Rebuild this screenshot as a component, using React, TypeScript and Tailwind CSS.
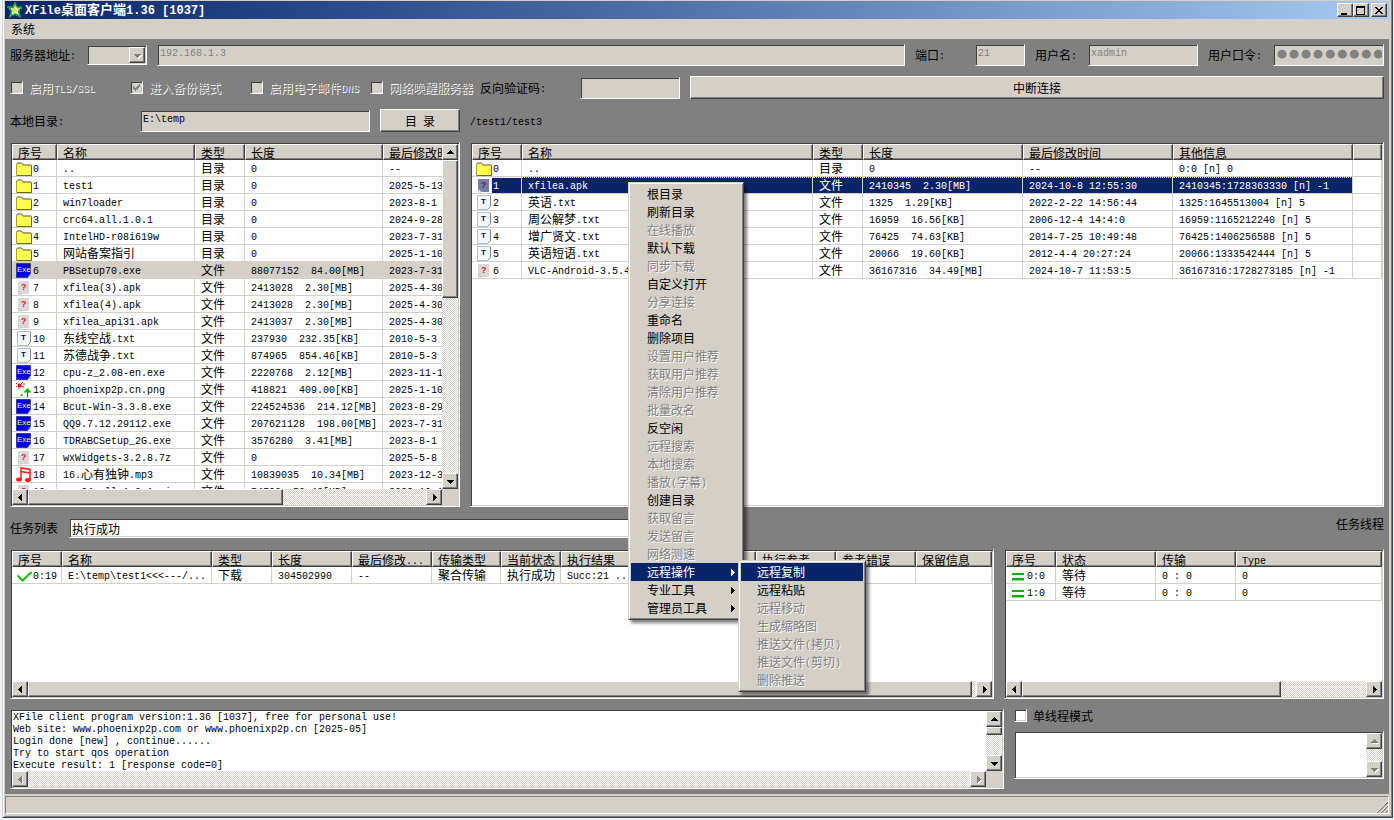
import { Fragment, type ReactNode } from "react";
import clsx from "clsx";

const sunken =
  "border border-t-[#808080] border-l-[#808080] border-r-white border-b-white p-px shadow-[inset_1px_1px_0_#404040,inset_-1px_-1px_0_#d4d0c8]";
const raised =
  "border border-t-white border-l-white border-r-[#404040] border-b-[#404040] bg-[#d4d0c8] shadow-[inset_-1px_-1px_0_#808080]";
const track =
  "bg-[repeating-conic-gradient(#ffffff_0_25%,#d4d0c8_0_50%)] bg-[length:2px_2px]";
const mono = "font-['Liberation_Mono','Noto_Sans_CJK_SC',monospace]";

/* Chinese runs are 12px, Latin runs are set half as wide */
function Mixed({ text }: { text: string }) {
  const runs = text.match(/[\u2e80-\uffff]+|[^\u2e80-\uffff]+/g) ?? [];
  return (
    <>
      {runs.map((run, i) =>
        /[\u2e80-\uffff]/.test(run) ? (
          <Fragment key={i}>{run}</Fragment>
        ) : (
          <span key={i} className={clsx("align-[1px] text-[10px] leading-none whitespace-pre", mono)}>
            {run}
          </span>
        )
      )}
    </>
  );
}

type Dir = "up" | "down" | "left" | "right";

const arrowPaths: Record<Dir, string> = {
  up: "M4 2h1v1h1v1h1v1h1v1H1V5h1V4h1V3h1z",
  down: "M1 3h7v1H7v1H6v1H5v1H4V6H3V5H2V4H1z",
  left: "M5 1h1v7H5V7H4V6H3V5H2V4h1V3h1V2h1z",
  right: "M3 1h1v1h1v1h1v1h1v1H6v1H5v1H4v1H3z",
};

function Arrow({ dir, disabled }: { dir: Dir; disabled?: boolean }) {
  return (
    <svg
      viewBox="0 0 9 9"
      shapeRendering="crispEdges"
      className={clsx("h-[9px] w-[9px] shrink-0", disabled && "drop-shadow-[1px_1px_0_#ffffff]")}
      fill={disabled ? "#808080" : "currentColor"}
    >
      <path d={arrowPaths[dir]} />
    </svg>
  );
}

function ScrollButton({ dir, disabled }: { dir: Dir; disabled?: boolean }) {
  return (
    <button
      type="button"
      aria-label={`scroll ${dir}`}
      disabled={disabled}
      className={clsx("flex h-4 w-4 shrink-0 items-center justify-center", raised)}
    >
      <Arrow dir={dir} disabled={disabled} />
    </button>
  );
}

function HScroll({ thumb, disabled }: { thumb?: string; disabled?: boolean }) {
  return (
    <div className={clsx("flex h-4 min-w-0 flex-1", track)}>
      <ScrollButton dir="left" disabled={disabled} />
      <div className="flex min-w-0 flex-1">{thumb && <div className={clsx(raised, thumb)} />}</div>
      <ScrollButton dir="right" disabled={disabled} />
    </div>
  );
}

function VScroll({ thumb, disabled }: { thumb?: string; disabled?: boolean }) {
  return (
    <div className={clsx("flex w-4 shrink-0 flex-col", track)}>
      <ScrollButton dir="up" disabled={disabled} />
      <div className="min-h-0 flex-1">{thumb && <div className={clsx(raised, thumb)} />}</div>
      <ScrollButton dir="down" disabled={disabled} />
    </div>
  );
}

type IconName = "folder" | "exe" | "unknown" | "text" | "image" | "music" | "done" | "idle";

function FileIcon({ name, tinted }: { name: IconName; tinted?: boolean }) {
  return (
    <svg viewBox="0 0 16 15" className="h-[15px] w-4 shrink-0">
      {name === "folder" && (
        <>
          <path d="M.5 14.500v-11l1-1.500h4l1.500 2h8.500v10.500z" fill="#ffff4d" stroke="#a8a020" />
          <path d="M.5 3.500l1-1.500h4l1.500 2h8" fill="none" stroke="#808080" />
          <path d="M15.500 5v9.500H1" fill="none" stroke="#6b6b10" />
        </>
      )}
      {name === "exe" && (
        <>
          <path d="M.5.5h14v10l-3 4H.5z" fill="#0000e6" stroke="#3a3a9a" />
          <path d="M15 11.500v3h-3z" fill="#9fe8ff" />
          <text x="1" y="9" fontSize="8" fontFamily="Liberation Sans, sans-serif" fill="#ffff30">
            Exe
          </text>
        </>
      )}
      {name === "unknown" && (
        <>
          <path d="M2 1h11v13H5l-3-3z" fill={tinted ? "#7080a8" : "#d9d9d9"} />
          <path d="M2.500 11v3h3z" fill="#ffffff" stroke="#9a9a9a" strokeWidth=".6" />
          <text x="5" y="10" fontSize="9" fontWeight="bold" fontFamily="Liberation Sans, sans-serif" fill={tinted ? "#80103c" : "#e81010"}>
            ?
          </text>
        </>
      )}
      {name === "text" && (
        <>
          <path d="M1.500.5h13v11l-3 3h-10z" fill="#f0f8ff" stroke="#b4bcc4" />
          <path d="M14.500 1v10.500l-3 3" fill="none" stroke="#808890" />
          <text x="5" y="9" fontSize="8" fontWeight="bold" fontFamily="Liberation Sans, sans-serif" fill="#101010">
            T
          </text>
        </>
      )}
      {name === "image" && (
        <>
          <circle cx="3.500" cy="3.500" r="2" fill="#ff1010" />
          <path d="M0 1l1 1M5 2l2-2M5 4l3 1M3 5v2M0 5l1-1M7 2h2" stroke="#ff1010" />
          <path d="M11.500 15V8" stroke="#008000" />
          <path d="M11.500 6l4 4.500h-8z" fill="#00b000" />
          <path d="M4 13.500h3M5 12.500h2" stroke="#40c040" />
        </>
      )}
      {name === "music" && (
        <>
          <path d="M5 12V1l9 1.500v10M5 4.500l9 1.500" fill="none" stroke="#ff1818" strokeWidth="1.500" />
          <ellipse cx="3" cy="12.500" rx="3" ry="2" fill="#ff1818" />
          <ellipse cx="12" cy="13" rx="3" ry="2" fill="#ff1818" />
        </>
      )}
      {name === "done" && (
        <path d="M1.500 7.500l5 5 9-8.500" fill="none" stroke="#10c010" strokeWidth="2" />
      )}
      {name === "idle" && (
        <>
          <path d="M2 6h12M2 11h12" stroke="#00b400" strokeWidth="2" />
          <path d="M2 12.500h12" stroke="#80e080" />
        </>
      )}
    </svg>
  );
}

interface Row {
  icon: IconName;
  cells: string[];
  state?: "dimmed" | "active";
}

interface GridProps {
  label: string;
  heads: string[];
  widths: string[];
  rows: Row[];
  className?: string;
}

function ListGrid({ label, heads, widths, rows, className }: GridProps) {
  return (
    <table
      aria-label={label}
      className={clsx("table-fixed border-separate border-spacing-0", className)}
    >
      <colgroup>
        {widths.map((w, i) => (
          <col key={i} className={w} />
        ))}
      </colgroup>
      <thead>
        <tr>
          {heads.map((head, i) => (
            <th key={i} scope="col" className="p-0 text-left font-normal">
              <div className={clsx("h-4 overflow-hidden pl-[5px] leading-[15px] whitespace-nowrap", raised)}>
                <Mixed text={head} />
              </div>
            </th>
          ))}
        </tr>
      </thead>
      <tbody>
        {rows.map((row) => (
          <tr key={row.cells[0]} className={clsx(row.state === "dimmed" && "bg-[#d4d0c8]")}>
            {heads.map((_, i) => {
              const active = row.state === "active" && row.cells[i] !== undefined;
              return (
                <td
                  key={i}
                  className={clsx(
                    "h-[17px] overflow-hidden border-r border-b border-[#d4d0c8] p-0 whitespace-nowrap",
                    active && i > 0 && "border-t border-t-[#f0d890] bg-[#0a246a] text-white [border-top-style:dotted]"
                  )}
                >
                  {i === 0 ? (
                    <div className="flex h-[15px] items-center pl-1 leading-[14px]">
                      <FileIcon name={row.icon} tinted={active} />
                      <span
                        className={clsx(
                          "h-[15px] flex-1 pl-px",
                          active && "bg-[#0a246a] text-white outline-1 outline-dotted outline-[#f0d890]"
                        )}
                      >
                        <Mixed text={row.cells[0]} />
                      </span>
                    </div>
                  ) : (
                    <div className="h-[15px] pl-[6px] leading-[14px]">
                      <Mixed text={row.cells[i] ?? ""} />
                    </div>
                  )}
                </td>
              );
            })}
          </tr>
        ))}
      </tbody>
    </table>
  );
}

const localRows: Row[] = [
  { icon: "folder", cells: ["0", "..", "目录", "0", "--"] },
  { icon: "folder", cells: ["1", "test1", "目录", "0", "2025-5-13"] },
  { icon: "folder", cells: ["2", "win7loader", "目录", "0", "2023-8-1"] },
  { icon: "folder", cells: ["3", "crc64.all.1.0.1", "目录", "0", "2024-9-28"] },
  { icon: "folder", cells: ["4", "IntelHD-r08i619w", "目录", "0", "2023-7-31"] },
  { icon: "folder", cells: ["5", "网站备案指引", "目录", "0", "2025-1-10"] },
  { icon: "exe", cells: ["6", "PBSetup70.exe", "文件", "88077152  84.00[MB]", "2023-7-31"], state: "dimmed" },
  { icon: "unknown", cells: ["7", "xfilea(3).apk", "文件", "2413028  2.30[MB]", "2025-4-30"] },
  { icon: "unknown", cells: ["8", "xfilea(4).apk", "文件", "2413028  2.30[MB]", "2025-4-30"] },
  { icon: "unknown", cells: ["9", "xfilea_api31.apk", "文件", "2413037  2.30[MB]", "2025-4-30"] },
  { icon: "text", cells: ["10", "东线空战.txt", "文件", "237930  232.35[KB]", "2010-5-3"] },
  { icon: "text", cells: ["11", "苏德战争.txt", "文件", "874965  854.46[KB]", "2010-5-3"] },
  { icon: "exe", cells: ["12", "cpu-z_2.08-en.exe", "文件", "2220768  2.12[MB]", "2023-11-1"] },
  { icon: "image", cells: ["13", "phoenixp2p.cn.png", "文件", "418821  409.00[KB]", "2025-1-10"] },
  { icon: "exe", cells: ["14", "Bcut-Win-3.3.8.exe", "文件", "224524536  214.12[MB]", "2023-8-29"] },
  { icon: "exe", cells: ["15", "QQ9.7.12.29112.exe", "文件", "207621128  198.00[MB]", "2023-7-31"] },
  { icon: "exe", cells: ["16", "TDRABCSetup_2G.exe", "文件", "3576280  3.41[MB]", "2023-8-1"] },
  { icon: "unknown", cells: ["17", "wxWidgets-3.2.8.7z", "文件", "0", "2025-5-8"] },
  { icon: "music", cells: ["18", "16.心有独钟.mp3", "文件", "10839035  10.34[MB]", "2023-12-3"] },
  { icon: "unknown", cells: ["19", "crc64.all.1.0.1.zip", "文件", "54783  53.49[KB]", "2022-10-1"] },
];

const remoteRows: Row[] = [
  { icon: "folder", cells: ["0", "..", "目录", "0", "--", "0:0 [n] 0"] },
  { icon: "unknown", cells: ["1", "xfilea.apk", "文件", "2410345  2.30[MB]", "2024-10-8 12:55:30", "2410345:1728363330 [n] -1"], state: "active" },
  { icon: "text", cells: ["2", "英语.txt", "文件", "1325  1.29[KB]", "2022-2-22 14:56:44", "1325:1645513004 [n] 5"] },
  { icon: "text", cells: ["3", "周公解梦.txt", "文件", "16959  16.56[KB]", "2006-12-4 14:4:0", "16959:1165212240 [n] 5"] },
  { icon: "text", cells: ["4", "增广贤文.txt", "文件", "76425  74.63[KB]", "2014-7-25 10:49:48", "76425:1406256588 [n] 5"] },
  { icon: "text", cells: ["5", "英语短语.txt", "文件", "20066  19.60[KB]", "2012-4-4 20:27:24", "20066:1333542444 [n] 5"] },
  { icon: "unknown", cells: ["6", "VLC-Android-3.5.4", "文件", "36167316  34.49[MB]", "2024-10-7 11:53:5", "36167316:1728273185 [n] -1"] },
];

const taskRows: Row[] = [
  {
    icon: "done",
    cells: ["0:19", "E:\\temp\\test1<<<---/...", "下载", "304502990", "--", "聚合传输", "执行成功", "Succ:21 .."],
  },
];

const threadRows: Row[] = [
  { icon: "idle", cells: ["0:0", "等待", "0 : 0", "0"] },
  { icon: "idle", cells: ["1:0", "等待", "0 : 0", "0"] },
];

const logText = `XFile client program version:1.36 [1037], free for personal use!
Web site: www.phoenixp2p.com or www.phoenixp2p.cn [2025-05]
Login done [new] , continue......
Try to start qos operation
Execute result: 1 [response code=0]`;

interface MenuEntry {
  text: string;
  off?: boolean;
  children?: MenuEntry[];
  arrow?: boolean;
  hot?: boolean;
}

const contextMenu: MenuEntry[] = [
  { text: "根目录" },
  { text: "刷新目录" },
  { text: "在线播放", off: true },
  { text: "默认下载" },
  { text: "同步下载", off: true },
  { text: "自定义打开" },
  { text: "分享连接", off: true },
  { text: "重命名" },
  { text: "删除项目" },
  { text: "设置用户推荐", off: true },
  { text: "获取用户推荐", off: true },
  { text: "清除用户推荐", off: true },
  { text: "批量改名", off: true },
  { text: "反空闲" },
  { text: "远程搜索", off: true },
  { text: "本地搜索", off: true },
  { text: "播放(字幕)", off: true },
  { text: "创建目录" },
  { text: "获取留言", off: true },
  { text: "发送留言", off: true },
  { text: "网络测速", off: true },
  {
    text: "远程操作",
    arrow: true,
    hot: true,
    children: [
      { text: "远程复制", hot: true },
      { text: "远程粘贴" },
      { text: "远程移动", off: true },
      { text: "生成缩略图", off: true },
      { text: "推送文件(拷贝)", off: true },
      { text: "推送文件(剪切)", off: true },
      { text: "删除推送", off: true },
    ],
  },
  { text: "专业工具", arrow: true },
  { text: "管理员工具", arrow: true },
];

function Menu({ items, className }: { items: MenuEntry[]; className: string }) {
  return (
    <ul
      role="menu"
      className={clsx(
        "absolute border border-t-[#d4d0c8] border-l-[#d4d0c8] border-r-[#404040] border-b-[#404040] bg-[#d4d0c8] p-[2px]",
        "shadow-[inset_1px_1px_0_#ffffff,inset_-1px_-1px_0_#808080,3px_3px_3px_rgba(0,0,0,0.5)]",
        className
      )}
    >
      {items.map((item) => (
        <li key={item.text} role="none" className="relative">
          <button
            type="button"
            role="menuitem"
            disabled={item.off}
            className={clsx(
              "flex h-[18px] w-full items-center justify-between pr-1 pl-4 text-left leading-[18px] whitespace-nowrap",
              item.off && "text-[#808080] [text-shadow:1px_1px_0_#ffffff]",
              item.hot && "bg-[#0a246a] text-white"
            )}
          >
            <span>
              <Mixed text={item.text} />
            </span>
            {item.arrow && <Arrow dir="right" />}
          </button>
          {item.children && <Menu items={item.children} className="-top-[3px] left-full z-10 -ml-[3px] w-32" />}
        </li>
      ))}
    </ul>
  );
}

interface CheckProps {
  id: string;
  label: string;
  checked?: boolean;
  disabled?: boolean;
}

function Check({ id, label, checked, disabled }: CheckProps) {
  return (
    <div className="flex items-center gap-[6px]">
      <span className="grid">
        <input
          id={id}
          type="checkbox"
          defaultChecked={checked}
          disabled={disabled}
          className={clsx(
            "h-[13px] w-[13px] appearance-none [grid-area:1/1]",
            sunken,
            disabled ? "bg-[#d4d0c8]" : "bg-white"
          )}
        />
        {checked && (
          <svg viewBox="0 0 13 13" className="pointer-events-none h-[13px] w-[13px] [grid-area:1/1]" shapeRendering="crispEdges">
            <path d="M3 5v3l2 2 5-5V2L5 7z" fill="#808080" />
          </svg>
        )}
      </span>
      <label
        htmlFor={id}
        className={clsx(
          "whitespace-nowrap",
          disabled && "text-[#808080] [text-shadow:1px_1px_0_#ffffff]"
        )}
      >
        <Mixed text={label} />
      </label>
    </div>
  );
}

interface FieldProps {
  id: string;
  label?: string;
  value?: string;
  type?: string;
  disabled?: boolean;
  className?: string;
}

function Field({ id, label, value = "", type = "text", disabled, className }: FieldProps) {
  return (
    <input
      id={id}
      type={type}
      aria-label={label}
      defaultValue={value}
      disabled={disabled}
      className={clsx(
        "h-[22px] min-w-0 bg-[#d4d0c8] pb-1 pl-[2px] outline-none",
        sunken,
        disabled && "text-[#808080]",
        type === "password"
          ? "font-['DejaVu_Sans_Mono',monospace] text-[20px] leading-4 [-webkit-text-stroke:3px_#808080]"
          : clsx("text-[10px]", mono),
        className
      )}
    />
  );
}

function Label({ htmlFor, children, className }: { htmlFor?: string; children: string; className?: string }) {
  return (
    <label htmlFor={htmlFor} className={clsx("shrink-0 whitespace-nowrap", className)}>
      <Mixed text={children} />
    </label>
  );
}

function TitleButton({ label, children }: { label: string; children: ReactNode }) {
  return (
    <button type="button" aria-label={label} className={clsx("flex h-[14px] w-4 items-center justify-center", raised)}>
      <svg viewBox="0 0 10 9" className="h-[9px] w-[10px]" shapeRendering="crispEdges">
        {children}
      </svg>
    </button>
  );
}

function TitleBar() {
  return (
    <header className="flex h-[18px] items-center bg-linear-to-r from-[#0a246a] to-[#a6caf0] pr-[2px] pl-[2px] text-white">
      <svg viewBox="0 0 16 16" className="h-4 w-4">
        <path
          d="M8 1l2 4.500 5-.5-3.500 4L13 14.500 8 12l-5 2.500L4.500 9 1 5l5 .5z"
          fill="#e8ffe8"
          stroke="#18a038"
          strokeWidth="2"
          strokeDasharray="2 .6"
        />
        <path d="M8 5l1 2 2 .5-1.500 1.500.5 2L8 10l-2 1 .5-2L5 7.500 7 7z" fill="#f0e020" />
      </svg>
      <h1 className="flex-1 pl-[2px] text-[13px] leading-[18px] font-bold whitespace-pre">
        <span className="font-['Liberation_Mono',monospace] text-[12px]">XFile</span>桌面客户端
        <span className="font-['Liberation_Mono',monospace] text-[12px]">1.36 [1037]</span>
      </h1>
      <div className="flex">
        <TitleButton label="最小化">
          <path d="M1 7h6v2H1z" />
        </TitleButton>
        <TitleButton label="最大化">
          <path d="M0 0h9v9H0zM1 2v6h7V2z" fillRule="evenodd" />
        </TitleButton>
      </div>
      <div className="ml-[2px] flex">
        <TitleButton label="关闭">
          <path d="M1 1h2v1h1v1h2V2h1V1h2v1H8v1H7v1H6v1h1v1h1v1h1v1H7V7H6V6H4v1H3v1H1V7h1V6h1V5h1V4H3V3H2V2H1z" />
        </TitleButton>
      </div>
    </header>
  );
}

function Connection() {
  return (
    <>
      <section className="flex h-[22px] items-center">
        <Label htmlFor="server-kind" className="w-[77px]">服务器地址:</Label>
        <div className={clsx("flex h-5 w-[60px] shrink-0 bg-[#d4d0c8]", sunken)}>
          <select id="server-kind" disabled className="min-w-0 flex-1 appearance-none" />
          <span className={clsx("flex w-4 items-center justify-center", raised)}>
            <Arrow dir="down" disabled />
          </span>
        </div>
        <Field id="server" label="服务器地址" value="192.168.1.3" disabled className="mx-[10px] flex-1" />
        <Label htmlFor="port" className="w-[60px]">端口:</Label>
        <Field id="port" value="21" disabled className="w-[50px]" />
        <Label htmlFor="user" className="ml-[10px] w-[53px]">用户名:</Label>
        <Field id="user" value="xadmin" disabled className="w-[110px]" />
        <Label htmlFor="password" className="ml-[10px] w-[65px]">用户口令:</Label>
        <Field id="password" type="password" value="xxxxxxxxxx" disabled className="w-[111px]" />
      </section>

      <section className="flex h-[23px] items-center">
        <div className="grid shrink-0 grid-cols-[120px_120px_120px_110px]">
          <Check id="tls" label="启用TLS/SSL" disabled />
          <Check id="backup" label="进入备份模式" checked disabled />
          <Check id="mail-dns" label="启用电子邮件DNS" disabled />
          <Check id="wake" label="网络唤醒服务器" disabled />
        </div>
        <Label htmlFor="reverse-code" className="w-[100px]">反向验证码:</Label>
        <Field id="reverse-code" className="w-[100px]" />
        <button type="button" className={clsx("ml-[10px] h-[23px] flex-1", raised)}>
          中断连接
        </button>
      </section>

      <section className="flex h-[23px] items-center">
        <Label htmlFor="local-dir" className="w-[130px]">本地目录:</Label>
        <Field id="local-dir" value="E:\temp" className="w-[230px]" />
        <button type="button" className={clsx("mx-[10px] h-[23px] w-20", raised)}>
          <Mixed text="目 录" />
        </button>
        <span>
          <Mixed text="/test1/test3" />
        </span>
      </section>
    </>
  );
}

export default function App() {
  return (
    <div className="relative min-h-screen overflow-hidden bg-[#f2f5f8] pr-px pl-[2px] font-['Noto_Sans_CJK_SC',sans-serif] text-[12px] leading-4 text-black">
      <div className="border-r border-b border-l border-r-[#404040] border-b-[#404040] border-l-[#d4d0c8] bg-[#d4d0c8] pt-px pr-[3px] pb-px pl-[2px] shadow-[inset_1px_0_0_#ffffff,inset_-1px_-1px_0_#808080]">
        <TitleBar />
        <nav className="flex h-5 items-center px-[6px]">
          <button type="button">系统</button>
        </nav>

        <main className="flex flex-col gap-[10px] bg-[#808080] p-[5px]">
          <Connection />

          <section className="flex h-[365px] gap-[10px]">
            <div className={clsx("flex w-[450px] shrink-0 flex-col bg-white", sunken)}>
              <div className="flex min-h-0 flex-1">
                <div className="min-w-0 flex-1 overflow-hidden">
                  <ListGrid
                    label="本地文件"
                    heads={["序号", "名称", "类型", "长度", "最后修改时间"]}
                    widths={["w-[45px]", "w-[138px]", "w-[50px]", "w-[138px]", "w-[120px]"]}
                    rows={localRows}
                    className="w-[491px]"
                  />
                </div>
                <VScroll thumb="h-[138px]" />
              </div>
              <div className="flex bg-[#d4d0c8] pr-4">
                <HScroll thumb="w-[255px]" />
              </div>
            </div>
            <div className={clsx("min-w-0 flex-1 overflow-hidden bg-white", sunken)}>
              <ListGrid
                label="远程文件"
                heads={["序号", "名称", "类型", "长度", "最后修改时间", "其他信息", ""]}
                widths={["w-[50px]", "w-[291px]", "w-[50px]", "w-[160px]", "w-[150px]", "w-[180px]", ""]}
                rows={remoteRows}
                className="w-full"
              />
            </div>
          </section>

          <section className="flex h-[22px] items-center">
            <Label htmlFor="task-state" className="w-[59px]">任务列表</Label>
            <input
              id="task-state"
              defaultValue="执行成功"
              className={clsx("h-5 w-[640px] bg-white pl-[2px] outline-none", sunken)}
            />
            <span className="mb-2 ml-auto">任务线程</span>
          </section>

          <section className="flex h-[150px] gap-[10px]">
            <div className={clsx("flex min-w-0 flex-1 flex-col bg-white", sunken)}>
              <div className="min-h-0 flex-1 overflow-hidden">
                <ListGrid
                  label="任务列表"
                  heads={["序号", "名称", "类型", "长度", "最后修改...", "传输类型", "当前状态", "执行结果", "", "执行参考", "参考错误", "保留信息"]}
                  widths={["w-[50px]", "w-[150px]", "w-[60px]", "w-[80px]", "w-[80px]", "w-[69px]", "w-[60px]", "w-[80px]", "w-[115px]", "w-[80px]", "w-[80px]", ""]}
                  rows={taskRows}
                  className="w-full"
                />
              </div>
              <div className="flex">
                <HScroll thumb="mr-1 flex-1" />
              </div>
            </div>
            <div className={clsx("flex w-[380px] shrink-0 flex-col bg-white", sunken)}>
              <div className="min-h-0 flex-1 overflow-hidden">
                <ListGrid
                  label="任务线程"
                  heads={["序号", "状态", "传输", "Type"]}
                  widths={["w-[50px]", "w-[100px]", "w-[80px]", ""]}
                  rows={threadRows}
                  className="w-full"
                />
              </div>
              <div className="flex">
                <HScroll thumb="w-[259px]" />
              </div>
            </div>
          </section>

          <section className="flex h-20 gap-[10px]">
            <div className={clsx("flex min-w-0 flex-1 flex-col bg-white", sunken)}>
              <div className="flex min-h-0 flex-1">
                <textarea
                  aria-label="日志"
                  readOnly
                  defaultValue={logText}
                  className={clsx("min-w-0 flex-1 resize-none overflow-hidden pl-px pt-px text-[10px] leading-[12px] outline-none", mono)}
                />
                <VScroll thumb="h-2" />
              </div>
              <div className="flex bg-[#d4d0c8] pr-4">
                <HScroll disabled />
              </div>
            </div>
            <div className="flex w-[370px] shrink-0 flex-col justify-between pb-[10px]">
              <div className="h-[13px] leading-[13px]">
                <Check id="single" label="单线程模式" />
              </div>
              <div className={clsx("flex h-12 bg-white", sunken)}>
                <textarea aria-label="线程输出" readOnly className="min-w-0 flex-1 resize-none overflow-hidden outline-none" />
                <VScroll disabled />
              </div>
            </div>
          </section>
        </main>

        <footer className="py-[2px]">
          <div className="flex h-[18px] items-end justify-end border border-t-[#808080] border-r-white border-b-white border-l-[#808080]">
            <svg viewBox="0 0 12 12" className="h-3 w-3">
              <path d="M1 12L12 1M5 12l7-7M9 12l3-3" stroke="#808080" strokeWidth="1.500" />
              <path d="M0 12L12 0M4 12l8-8M8 12l4-4" stroke="#ffffff" strokeWidth=".7" />
            </svg>
          </div>
        </footer>
      </div>

      <Menu items={contextMenu} className="top-[182px] left-[628px] w-[116px]" />
    </div>
  );
}
